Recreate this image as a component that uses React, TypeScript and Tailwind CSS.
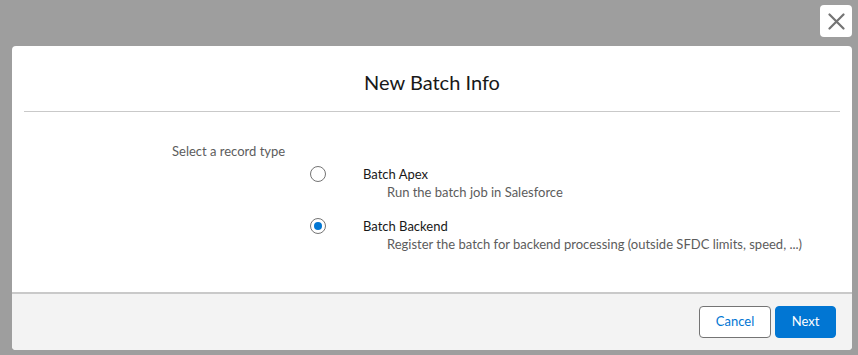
import React from "react";

const font = { fontFamily: "Lato, 'Noto Sans', sans-serif" };

function Radio({ checked }: { checked?: boolean }) {
  return (
    <span className="flex h-4 w-4 shrink-0 items-center justify-center rounded-full border border-[#747474] bg-white">
      {checked && <span className="h-2 w-2 rounded-full bg-[#0176d3]" />}
    </span>
  );
}

function Option({ label, desc, checked }: { label: string; desc: string; checked?: boolean }) {
  return (
    <div className="flex items-start">
      <div className="flex h-4 items-center pt-0">
        <Radio checked={checked} />
      </div>
      <div className="ml-[37px] -mt-[1px]">
        <div className="text-[13px] leading-[18px] text-[#181818]">{label}</div>
        <div className="ml-[24px] text-[13px] leading-[18px] text-[#5c5c5c]">{desc}</div>
      </div>
    </div>
  );
}

export default function App() {
  return (
    <div className="flex h-[355px] w-[858px] flex-col bg-[#9e9e9e]" style={font}>
      <div className="flex justify-end pr-[6px] pt-[5px]">
        <button className="flex h-8 w-8 items-center justify-center rounded bg-white">
          <svg width="17" height="17" viewBox="0 0 17 17" fill="none">
            <path d="M1.5 1.5 L15.5 15.5 M15.5 1.5 L1.5 15.5" stroke="#747474" strokeWidth="2.2" strokeLinecap="round" />
          </svg>
        </button>
      </div>
      <div className="ml-[12px] mt-[9px] flex w-[840px] flex-col overflow-hidden rounded bg-white">
        <div className="mx-[12px] border-b border-[#c9c9c9] pb-[16px] pt-[24px] text-center">
          <h2 className="text-[20px] leading-[25px] text-[#181818]">New Batch Info</h2>
        </div>
        <div className="h-[180px] pl-[160px] pt-[30px]">
          <div className="text-[13px] leading-[18px] text-[#5c5c5c]">Select a record type</div>
          <div className="ml-[138px] mt-[6px] flex flex-col gap-[17px]">
            <Option label="Batch Apex" desc="Run the batch job in Salesforce" />
            <Option
              label="Batch Backend"
              desc="Register the batch for backend processing (outside SFDC limits, speed, ...)"
              checked
            />
          </div>
        </div>
        <div className="flex justify-end gap-[4px] border-t-2 border-[#c9c9c9] bg-[#f3f3f3] px-[16px] py-[12px]">
          <button className="h-8 w-[72px] rounded border border-[#747474] bg-white text-[13px] text-[#0176d3]">
            Cancel
          </button>
          <button className="h-8 w-[61px] rounded border border-[#0176d3] bg-[#0176d3] text-[13px] text-white">
            Next
          </button>
        </div>
      </div>
    </div>
  );
}
